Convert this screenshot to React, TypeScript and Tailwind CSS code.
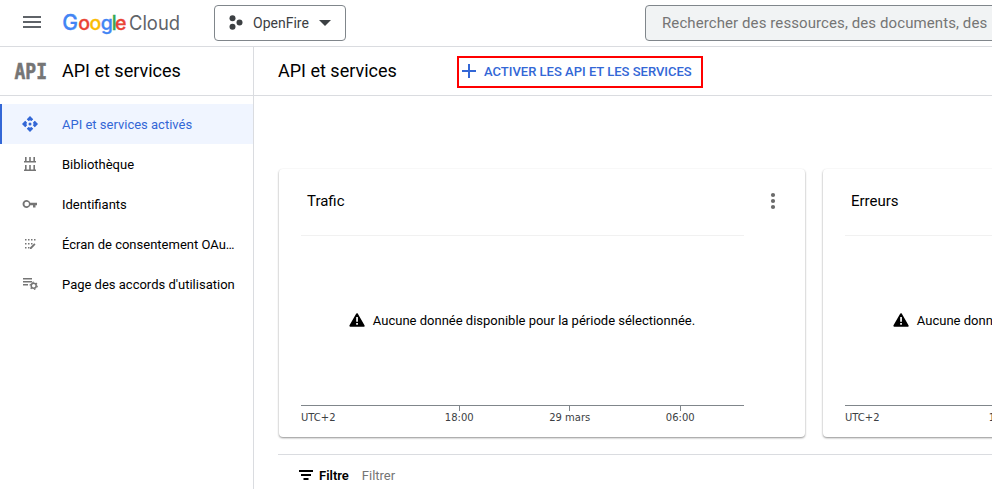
import React from "react";

function EnabledIcon() {
  return (
    <svg viewBox="0 0 16 16" className="size-4" fill="currentColor">
      <path d="M8 0l3.200 3.200-1.700 1.700L8 3.500 6.500 4.900 4.800 3.200zM8 16l3.200-3.200-1.700-1.700L8 12.500l-1.500-1.400-1.700 1.700zM0 8l3.200-3.200 1.700 1.700L3.500 8l1.400 1.500-1.700 1.700zM16 8l-3.200-3.200-1.700 1.700L12.500 8l-1.400 1.500 1.700 1.700z" />
      <path d="M8 .8 10.800 3.400 9.500 4.600H6.500L5.200 3.400zM8 15.200l2.800-2.600-1.300-1.200H6.500l-1.300 1.200zM.8 8l2.600-2.800 1.200 1.300v3l-1.200 1.300zM15.200 8l-2.600-2.800-1.200 1.300v3l1.200 1.300z" />
      <circle cx="8" cy="8" r="1.500" />
    </svg>
  );
}

function LibraryIcon() {
  return (
    <svg viewBox="0 0 16 16" className="size-4" fill="currentColor">
      <path d="M2 5h12v1.500H2zM3 1h1.600v4H3zM7.200 1h1.600v4H7.200zM11.400 1H13v4h-1.600zM2 13.500h12V15H2zM3 9h1.600v4.500H3zM7.200 9h1.600v4.500H7.200zM11.400 9H13v4.500h-1.600z" />
    </svg>
  );
}

function KeyIcon() {
  return (
    <svg viewBox="0 0 16 16" className="size-4" fill="currentColor">
      <path fillRule="evenodd" d="M8.300 6.700A4 4 0 1 0 8.300 9.300H11V11.500h2.500V9.300H15V6.700zM4.700 5.700a2.300 2.300 0 1 1 0 4.600 2.300 2.300 0 0 1 0-4.600z" />
    </svg>
  );
}

function ConsentIcon() {
  return (
    <svg viewBox="0 0 16 16" className="size-4" fill="currentColor">
      <path d="M3 3h1.500v1.500H3zM6 3h1.500v1.500H6zM9 3h1.500v1.500H9zM12 3h1.500v1.500H12zM3 7h1.500v1.500H3zM6 7h1.500v1.500H6zM9 7h1.500v1.500H9zM3 11h1.500v1.500H3zM6 11h1.500v1.500H6z" />
      <path d="M8 13v-1.500l4.300-4.300 1.200 1.200L9.300 13z" />
    </svg>
  );
}

function AgreementIcon() {
  return (
    <svg viewBox="0 0 16 16" className="size-4" fill="currentColor">
      <path d="M1 2h9v1.500H1zM1 5h9v1.500H1zM1 8h5v1.500H1z" />
      <circle cx="11.700" cy="9.800" r="2.500" fill="none" stroke="currentColor" strokeWidth="1.500" />
      <circle cx="11.700" cy="9.800" r="3.600" fill="none" stroke="currentColor" strokeWidth="1.200" strokeDasharray="1.500 2.270" />
    </svg>
  );
}

const NAV = [
  { label: "API et services activés", icon: <EnabledIcon />, active: true },
  { label: "Bibliothèque", icon: <LibraryIcon /> },
  { label: "Identifiants", icon: <KeyIcon /> },
  { label: "Écran de consentement OAuth", icon: <ConsentIcon /> },
  { label: "Page des accords d'utilisation", icon: <AgreementIcon /> },
];

function Logo() {
  return (
    <svg width="119" height="28" className="block overflow-visible" fontFamily="Inter, sans-serif">
      <text y="21" fontSize="19.500" fontWeight="500" strokeWidth="0.300">
        <tspan x="-0.800" fontSize="21" fill="#4285f4" stroke="#4285f4">G</tspan>
        <tspan x="15.300" fill="#ea4335" stroke="#ea4335">o</tspan>
        <tspan x="26.600" fill="#fbbc04" stroke="#fbbc04">o</tspan>
        <tspan x="37.800" fill="#4285f4" stroke="#4285f4">g</tspan>
        <tspan x="48.700" fill="#34a853" stroke="#34a853">l</tspan>
        <tspan x="52" fill="#ea4335" stroke="#ea4335">e</tspan>
      </text>
      <text x="66" y="21" fontSize="20" fill="#5f6368" textLength="51" lengthAdjust="spacingAndGlyphs">Cloud</text>
    </svg>
  );
}

function ChartCard({ title }: { title: string }) {
  return (
    <section className="h-[268px] w-[526px] shrink-0 rounded bg-white pl-[22px] shadow-[0_1px_2px_rgba(0,0,0,0.38),0_1px_3px_rgba(0,0,0,0.08)]">
      <div className="flex h-[66px] w-[482px] items-center justify-between pb-[2px] pl-[6px]">
        <h2 className="text-[15px]">{title}</h2>
        <svg width="6" height="18" className="mr-[7px]" fill="#6b6b6b">
          <circle cx="3" cy="3" r="2.100" />
          <circle cx="3" cy="9" r="2.100" />
          <circle cx="3" cy="15" r="2.100" />
        </svg>
      </div>
      <div className="flex h-[171px] w-[443px] items-center justify-center border-y border-t-[#f1f1f1] border-b-[#80868b] pr-px">
        <svg width="16" height="14" viewBox="0 0 16 14" className="mr-2 mb-px shrink-0">
          <path d="M8 1.200 14.600 12.800H1.400z" fill="#000" stroke="#000" strokeWidth="2" strokeLinejoin="round" />
          <path d="M7.200 4h1.700v4.800H7.200zM7.200 10h1.700v1.700H7.200z" fill="#fff" />
        </svg>
        <span className="text-[13px] whitespace-nowrap">Aucune donnée disponible pour la période sélectionnée.</span>
      </div>
      <div className="flex w-[443px] font-['DejaVu_Sans',sans-serif] text-[10px] leading-[12px] text-[#3c4043]">
        <span className="w-[103px] pt-[6px]">UTC+2</span>
        {["18:00", "29 mars", "06:00"].map((tick) => (
          <span key={tick} className="flex w-[110.500px] flex-col items-center">
            <i className="h-[5px] w-px bg-[#80868b]" />
            <span className="mt-px">{tick}</span>
          </span>
        ))}
      </div>
    </section>
  );
}

export default function App() {
  return (
    <div className="flex h-[489px] w-[992px] flex-col overflow-hidden bg-white font-[Roboto,sans-serif] text-black">
      <header className="flex h-[47px] shrink-0 border-b border-[#dadce0]">
        <svg width="18" height="12" className="mt-4 ml-[23px] shrink-0" fill="#5f6368">
          <path d="M0 0h18v2H0zM0 5h18v2H0zM0 10h18v2H0z" />
        </svg>
        <div className="mt-[9px] ml-[22px] w-[151px] shrink-0"><Logo /></div>
        <button className="mt-[5px] flex h-9 w-[132px] shrink-0 items-center rounded-[4px] border border-[#80868b] pl-[14px] text-[#3c4043]">
          <svg width="14" height="16" className="shrink-0" fill="#3c4043">
            <circle cx="3.500" cy="3.300" r="3" />
            <circle cx="3.500" cy="11.700" r="3" />
            <circle cx="10.500" cy="7.500" r="3" />
          </svg>
          <span className="ml-[10px] w-[56px] text-[14px] whitespace-nowrap">OpenFire</span>
          <svg width="12" height="6" className="ml-[10px]" fill="#3c4043"><path d="M0 0h12L6 6z" /></svg>
        </button>
        <div className="mt-[5px] ml-[299px] flex h-9 w-[600px] shrink-0 items-center rounded-[4px] border border-[#80868b] bg-[#f1f3f4] pl-4 text-[15px] tracking-[0.090px] whitespace-nowrap text-[#757575]">
          Rechercher des ressources, des documents, des
        </div>
      </header>
      <div className="flex min-h-0 flex-1">
        <aside className="w-[254px] shrink-0 border-r border-[#dadce0]">
          <div className="flex h-[49px] items-center border-b border-[#dadce0] pl-[14px]">
            <svg width="34" height="18" className="mr-[14px] overflow-visible">
              <text
                x="0.500"
                y="17"
                fontSize="22"
                textLength="32.500"
                lengthAdjust="spacingAndGlyphs"
                fill="#757575"
                stroke="#757575"
                strokeWidth="0.600"
                fontFamily="'DejaVu Sans Mono', monospace"
                fontWeight="700"
              >
                API
              </text>
            </svg>
            <h1 className="pb-[2px] text-[18px]">API et services</h1>
          </div>
          <nav className="pt-2">
            {NAV.map((item) => (
              <a
                key={item.label}
                className={
                  item.active
                    ? "flex h-10 items-center border-l-2 border-[#3367d6] bg-[#f0f5ff] pl-5 text-[#3367d6]"
                    : "flex h-10 items-center pl-[22px] text-[#757575]"
                }
              >
                {item.icon}
                <span className={item.active ? "ml-6 pt-[2px] text-[13px]" : "ml-6 w-[174px] truncate pt-[2px] text-[13px] text-black"}>
                  {item.label}
                </span>
              </a>
            ))}
          </nav>
        </aside>
        <main className="min-w-0 flex-1 overflow-hidden">
          <div className="flex h-[49px] items-center border-b border-[#dadce0] pl-6">
            <h1 className="w-[179px] pb-[2px] text-[18px]">API et services</h1>
            <button className="mt-px flex h-8 w-[246px] items-center border-2 border-[#f00] pl-[3px] text-[#3367d6]">
              <svg width="14" height="14" className="mb-[2px]" fill="currentColor"><path d="M6 0h2v6h6v2H8v6H6V8H0V6h6z" /></svg>
              <span className="ml-2 text-[13px] font-medium whitespace-nowrap">ACTIVER LES API ET LES SERVICES</span>
            </button>
          </div>
          <div className="flex gap-[18px] pt-[73px] pl-[25px]">
            <ChartCard title="Trafic" />
            <ChartCard title="Erreurs" />
          </div>
          <div className="mt-[17px] ml-6 flex h-[42px] items-center border-t border-[#dadce0] pl-[21px] text-[13px]">
            <svg width="14" height="10" fill="#000" className="mb-px"><path d="M0 0h14v2H0zM2 4h10v2H2zM4.500 8h5v2h-5z" /></svg>
            <span className="ml-[6px] font-semibold">Filtre</span>
            <span className="ml-[13px] text-[#757575]">Filtrer</span>
          </div>
        </main>
      </div>
    </div>
  );
}
